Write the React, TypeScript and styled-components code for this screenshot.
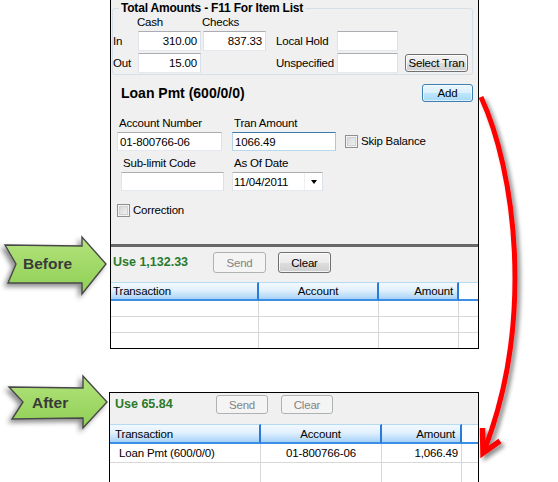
import React from "react";
import styled, { createGlobalStyle, css } from "styled-components";

const GlobalStyle = createGlobalStyle`
  html, body { margin: 0; padding: 0; background: #fff; }
  body { font-family: "Liberation Sans", Arial, sans-serif; font-size: 11px; color: #000; }
  * { box-sizing: border-box; }
`;

const Page = styled.div`
  position: relative;
  width: 558px;
  height: 482px;
  overflow: hidden;
  background: #fff;
  display: flex;
  flex-direction: column;
  padding-left: 109px;
`;

const Window = styled.div<{ $left: number; $top: number; $width: number }>`
  flex-shrink: 0;
  width: ${(p) => p.$width}px;
  margin-left: ${(p) => p.$left}px;
  margin-top: ${(p) => p.$top}px;
  border: 1px solid #000;
  background: #f0f0f0;
  display: flex;
  flex-direction: column;
`;

const GroupBox = styled.fieldset`
  margin: 1px 5px 0 1px;
  padding: 2px 0 1px 0;
  border: 1px solid #d5dfe5;
  border-radius: 3px;
  min-width: 0;
`;

const Legend = styled.legend`
  margin-left: 6px;
  padding: 0 2px;
  font-size: 12px;
  font-weight: bold;
  line-height: 14px;
  letter-spacing: -0.2px;
`;

const AmountsGrid = styled.div`
  display: grid;
  grid-template-columns: 25px 65px 73px 61px 68px 63px;
  grid-template-rows: 12px 20px 20px;
  row-gap: 2px;
  align-items: center;
  & > :nth-child(-n + 6) { margin-bottom: 1px; }
`;

const Caption = styled.span<{ $shift?: number }>`
  font-size: 11.5px;
  line-height: 13px;
  letter-spacing: -0.2px;
  white-space: nowrap;
  margin-left: ${(p) => p.$shift ?? 0}px;
`;

const TextBox = styled.div<{ $w: number; $h: number; $right?: boolean; $focus?: boolean }>`
  width: ${(p) => p.$w}px;
  height: ${(p) => p.$h}px;
  background: #fff;
  border: 1px solid;
  border-color: ${(p) =>
    p.$focus ? "#3d7bad #a4c9e3 #b7d9ed #b5cfe7" : "#abadb3 #dbdfe6 #e3e9ef #e2e3ea"};
  display: flex;
  align-items: center;
  justify-content: ${(p) => (p.$right ? "flex-end" : "flex-start")};
  padding: 0 3px 0 2px;
  font-size: 11.5px;
  letter-spacing: -0.15px;
  white-space: nowrap;
`;

const buttonVariants = {
  normal: css`
    border: 1px solid #707070;
    background: linear-gradient(#f2f2f2 0%, #ebebeb 50%, #dddddd 51%, #cfcfcf 100%);
    box-shadow: inset 0 0 0 1px rgba(255, 255, 255, 0.75);
    color: #000;
  `,
  primary: css`
    border: 1px solid #3c7fb1;
    background: linear-gradient(#eaf6fd 0%, #d9f0fc 50%, #bee6fd 51%, #a7d9f5 100%);
    box-shadow: inset 0 0 0 1px rgba(255, 255, 255, 0.6);
    color: #000;
  `,
  disabled: css`
    border: 1px solid #adb2b5;
    background: #f4f4f4;
    color: #838383;
  `,
};

const Button = styled.button<{ $w: number; $h: number; $variant: keyof typeof buttonVariants }>`
  width: ${(p) => p.$w}px;
  height: ${(p) => p.$h}px;
  padding: 0;
  margin: 0;
  border-radius: 3px;
  font-family: "Liberation Sans", Arial, sans-serif;
  font-size: 11.5px;
  letter-spacing: -0.2px;
  flex-shrink: 0;
  ${(p) => buttonVariants[p.$variant]}
`;

const TranHeader = styled.div`
  margin-top: 8px;
  height: 19px;
  padding: 0 5px 0 10px;
  display: flex;
  align-items: center;
  justify-content: space-between;
`;

const TranTitle = styled.span`
  font-size: 14px;
  font-weight: bold;
  line-height: 18px;
`;

const FieldGrid = styled.div`
  margin-top: 15px;
  padding-left: 6px;
  display: grid;
  grid-template-columns: 115px 113px auto;
  row-gap: 6px;
`;

const Field = styled.div<{ $indent?: number }>`
  display: flex;
  flex-direction: column;
  gap: 2px;
  margin-left: ${(p) => p.$indent ?? 0}px;
`;

const FieldLabel = styled(Caption)`
  padding-left: 2px;
`;

const CheckLabel = styled.label<{ $h?: number }>`
  display: flex;
  align-items: center;
  gap: 3px;
  height: ${(p) => p.$h ?? 13}px;
  align-self: end;
`;

const CheckBox = styled.span`
  width: 13px;
  height: 13px;
  flex-shrink: 0;
  border: 1px solid #8e8f8f;
  background: linear-gradient(135deg, #cfd2d6 0%, #f6f6f6 100%);
  box-shadow: inset 0 0 0 1px #f4f4f4, inset 0 0 0 2px #d0d0d0;
`;

const DateBox = styled(TextBox)`
  padding: 0 0 0 1px;
`;

const DateText = styled.span`
  flex: 1;
`;

const DropButton = styled.span`
  width: 18px;
  height: 100%;
  display: flex;
  align-items: center;
  justify-content: center;
  border-left: 1px solid #f0f0f0;
  &::after {
    content: "";
    border-left: 3.5px solid transparent;
    border-right: 3.5px solid transparent;
    border-top: 4px solid #000;
  }
`;

const CorrectionRow = styled.div`
  margin-top: 13px;
  padding-left: 6px;
  display: flex;
`;

const Separator = styled.div`
  margin-top: 27px;
  height: 3px;
  background: #686868;
`;

const UseBar = styled.div<{ $h: number; $pt: number; $pl: number; $gap: number }>`
  height: ${(p) => p.$h}px;
  padding: ${(p) => p.$pt}px 0 0 ${(p) => p.$pl}px;
  display: flex;
  align-items: flex-start;
  gap: ${(p) => p.$gap}px;
`;

const UseLabel = styled.span<{ $w: number; $h: number }>`
  width: ${(p) => p.$w}px;
  line-height: ${(p) => p.$h}px;
  font-size: 12.5px;
  font-weight: bold;
  color: #2a7a2a;
  white-space: nowrap;
`;

const DataGrid = styled.div<{ $cols: string }>`
  display: grid;
  grid-template-columns: ${(p) => p.$cols};
`;

const HeadCell = styled.div<{ $h: number; $align: string; $pl?: number; $pr?: number; $blank?: boolean }>`
  height: ${(p) => p.$h}px;
  display: flex;
  align-items: center;
  justify-content: ${(p) => p.$align};
  padding: 0 ${(p) => p.$pr ?? 0}px 0 ${(p) => p.$pl ?? 0}px;
  font-size: 11.5px;
  letter-spacing: -0.15px;
  white-space: nowrap;
  border-top: 1px solid #b5dbf3;
  border-bottom: 2px solid #3a8ee6;
  ${(p) =>
    p.$blank
      ? css`
          background: #fbfdff;
        `
      : css`
          background: linear-gradient(#f3f9ff 0%, #e1f0fd 45%, #bcdefa 80%, #a7d1f6 100%);
          border-right: 2px solid #2a7bd8;
        `}
`;

const BodyCell = styled.div<{ $h: number; $align: string; $pl?: number; $pr?: number; $last?: boolean; $lastRow?: boolean }>`
  height: ${(p) => p.$h}px;
  display: flex;
  align-items: center;
  justify-content: ${(p) => p.$align};
  padding: 0 ${(p) => p.$pr ?? 0}px 0 ${(p) => p.$pl ?? 0}px;
  background: #fff;
  font-size: 11.5px;
  letter-spacing: -0.15px;
  white-space: nowrap;
  border-right: ${(p) => (p.$last ? "none" : "1px solid #d8d8d8")};
  border-bottom: ${(p) => (p.$lastRow ? "none" : "1px solid #d8d8d8")};
`;

const Overlay = styled.svg`
  position: absolute;
  left: 0;
  top: 0;
  overflow: visible;
  pointer-events: none;
`;

const CalloutText = styled.text`
  font-family: "Liberation Sans", Arial, sans-serif;
  font-weight: bold;
  font-size: 15.5px;
  fill: #3a3a3a;
`;

function Table({
  cols,
  headH,
  rowHs,
  rows,
  headPad,
  cellPad,
}: {
  cols: string;
  headH: number;
  rowHs: number[];
  rows: string[][];
  headPad: [number, number];
  cellPad: [number, number];
}) {
  return (
    <DataGrid $cols={cols}>
      <HeadCell $h={headH} $align="flex-start" $pl={headPad[0]}>Transaction</HeadCell>
      <HeadCell $h={headH} $align="center">Account</HeadCell>
      <HeadCell $h={headH} $align="flex-end" $pr={headPad[1]}>Amount</HeadCell>
      <HeadCell $h={headH} $align="flex-start" $blank />
      {rowHs.map((h, i) => {
        const r = rows[i] ?? ["", "", ""];
        const lastRow = i === rowHs.length - 1;
        return (
          <React.Fragment key={i}>
            <BodyCell $h={h} $align="flex-start" $pl={cellPad[0]} $lastRow={lastRow}>{r[0]}</BodyCell>
            <BodyCell $h={h} $align="center" $lastRow={lastRow}>{r[1]}</BodyCell>
            <BodyCell $h={h} $align="flex-end" $pr={cellPad[1]} $lastRow={lastRow}>{r[2]}</BodyCell>
            <BodyCell $h={h} $align="flex-start" $last $lastRow={lastRow} />
          </React.Fragment>
        );
      })}
    </DataGrid>
  );
}

function Callout({ id, points, label, tx, ty }: { id: string; points: string; label: string; tx: number; ty: number }) {
  return (
    <Overlay width="120" height="482" viewBox="0 0 120 482">
      <defs>
        <linearGradient id={`g-${id}`} x1="0" y1="0" x2="0" y2="1">
          <stop offset="0" stopColor="#b3e37c" />
          <stop offset="1" stopColor="#8fcf55" />
        </linearGradient>
        <filter id={`s-${id}`} x="-30%" y="-30%" width="160%" height="160%">
          <feDropShadow dx="-3" dy="3" stdDeviation="2.5" floodColor="#000" floodOpacity="0.45" />
        </filter>
      </defs>
      <polygon
        points={points}
        fill={`url(#g-${id})`}
        stroke="#474747"
        strokeWidth="1.4"
        strokeLinejoin="miter"
        filter={`url(#s-${id})`}
      />
      <CalloutText x={tx} y={ty}>{label}</CalloutText>
    </Overlay>
  );
}

function RedArrow() {
  return (
    <Overlay width="558" height="482" viewBox="0 0 558 482">
      <defs>
        <filter id="red-shadow" x="-50%" y="-10%" width="200%" height="120%">
          <feDropShadow dx="3" dy="3" stdDeviation="2" floodColor="#000" floodOpacity="0.45" />
        </filter>
      </defs>
      <g filter="url(#red-shadow)" fill="none" stroke="#ff0000" strokeWidth="5">
        <path d="M481 97 C515 170, 535 320, 484 451" />
        <path d="M482.5 428 L483 453 L500 441" strokeWidth="5.5" strokeLinejoin="miter" />
      </g>
    </Overlay>
  );
}

export default function App() {
  return (
    <>
      <GlobalStyle />
      <Page>
        <Window $left={1} $top={-1} $width={369}>
          <GroupBox>
            <Legend>Total Amounts - F11 For Item List</Legend>
            <AmountsGrid>
              <span />
              <Caption $shift={-1}>Cash</Caption>
              <Caption $shift={-1}>Checks</Caption>
              <span />
              <span />
              <span />

              <Caption>In</Caption>
              <TextBox $w={63} $h={20} $right>310.00</TextBox>
              <TextBox $w={63} $h={20} $right>837.33</TextBox>
              <Caption>Local Hold</Caption>
              <TextBox $w={61} $h={20} />
              <span />

              <Caption>Out</Caption>
              <TextBox $w={63} $h={20} $right>15.00</TextBox>
              <span />
              <Caption>Unspecified</Caption>
              <TextBox $w={61} $h={20} />
              <Button $w={63} $h={18} $variant="normal">Select Tran</Button>
            </AmountsGrid>
          </GroupBox>

          <TranHeader>
            <TranTitle>Loan Pmt (600/0/0)</TranTitle>
            <Button $w={51} $h={18} $variant="primary">Add</Button>
          </TranHeader>

          <FieldGrid>
            <Field>
              <FieldLabel>Account Number</FieldLabel>
              <TextBox $w={105} $h={19}>01-800766-06</TextBox>
            </Field>
            <Field>
              <FieldLabel>Tran Amount</FieldLabel>
              <TextBox $w={104} $h={19} $focus>1066.49</TextBox>
            </Field>
            <CheckLabel $h={19}>
              <CheckBox />
              <Caption>Skip Balance</Caption>
            </CheckLabel>

            <Field $indent={4}>
              <FieldLabel>Sub-limit Code</FieldLabel>
              <TextBox $w={103} $h={19} />
            </Field>
            <Field>
              <FieldLabel>As Of Date</FieldLabel>
              <DateBox $w={91} $h={19}>
                <DateText>11/04/2011</DateText>
                <DropButton />
              </DateBox>
            </Field>
            <span />
          </FieldGrid>

          <CorrectionRow>
            <CheckLabel>
              <CheckBox />
              <Caption>Correction</Caption>
            </CheckLabel>
          </CorrectionRow>

          <Separator />

          <UseBar $h={35} $pt={5} $pl={2} $gap={12}>
            <UseLabel $w={88} $h={21}>Use 1,132.33</UseLabel>
            <Button $w={53} $h={21} $variant="disabled">Send</Button>
            <Button $w={53} $h={21} $variant="normal">Clear</Button>
          </UseBar>

          <Table
            cols="148px 120px 80px 1fr"
            headH={19}
            rowHs={[16, 16, 15]}
            rows={[]}
            headPad={[2, 4]}
            cellPad={[8, 3]}
          />
        </Window>

        <Window $left={0} $top={43} $width={370}>
          <UseBar $h={31} $pt={2} $pl={5} $gap={13}>
            <UseLabel $w={88} $h={19}>Use 65.84</UseLabel>
            <Button $w={52} $h={19} $variant="disabled">Send</Button>
            <Button $w={52} $h={19} $variant="disabled">Clear</Button>
          </UseBar>
          <Table
            cols="151px 121px 80px 1fr"
            headH={20}
            rowHs={[19, 19]}
            rows={[["Loan Pmt (600/0/0)", "01-800766-06", "1,066.49"]]}
            headPad={[5, 5]}
            cellPad={[9, 3]}
          />
        </Window>

        <Callout
          id="before"
          points="5,245 82,246 82,237 106,264 82,294 82,283 8,283 16,264"
          label="Before"
          tx={23}
          ty={269}
        />
        <Callout
          id="after"
          points="9,387 83,388 83,376 107,402 83,428 83,418 12,419 23,402"
          label="After"
          tx={32}
          ty={408}
        />
        <RedArrow />
      </Page>
    </>
  );
}
